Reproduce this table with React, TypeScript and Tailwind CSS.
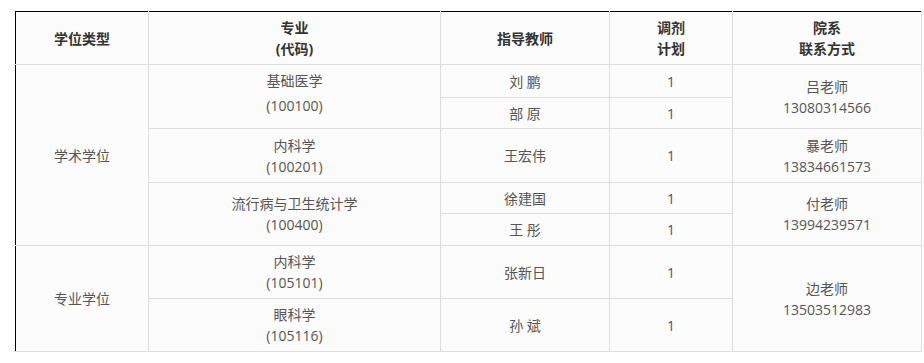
const cell = 'border border-[#dddddd] text-center align-middle px-2'

const App = () => {
  return (
    <div
      className="w-[924px] h-[363px] bg-white pt-[11px] pl-[15px] text-[14px] text-[#555555]"
      style={{ fontFamily: '"Open Sans", "Noto Sans CJK SC", sans-serif' }}
    >
      <table className="w-[906px] table-fixed border-collapse bg-[#fcfcfc] border-t border-l border-t-black border-l-black">
        <colgroup>
          <col className="w-[133px]" />
          <col className="w-[292px]" />
          <col className="w-[169px]" />
          <col className="w-[123px]" />
          <col className="w-[189px]" />
        </colgroup>
        <thead>
          <tr className="h-[53px] font-bold text-[#333333] leading-[21px]">
            <th className={`${cell} border-t-black border-l-black`}>学位类型</th>
            <th className={`${cell} border-t-black`}>
              专业
              <br />
              (代码)
            </th>
            <th className={`${cell} border-t-black`}>指导教师</th>
            <th className={`${cell} border-t-black`}>
              调剂
              <br />
              计划
            </th>
            <th className={`${cell} border-t-black`}>
              院系
              <br />
              联系方式
            </th>
          </tr>
        </thead>
        <tbody className="leading-[21px]">
          <tr className="h-[33px]">
            <td rowSpan={5} className={`${cell} border-l-black`}>学术学位</td>
            <td rowSpan={2} className={`${cell} leading-[25px] pb-[7px]`}>
              基础医学
              <br />
              (100100)
            </td>
            <td className={cell}>刘 鹏</td>
            <td className={cell}>1</td>
            <td rowSpan={2} className={cell}>
              吕老师
              <br />
              13080314566
            </td>
          </tr>
          <tr className="h-[31px]">
            <td className={cell}>部 原</td>
            <td className={cell}>1</td>
          </tr>
          <tr className="h-[54px]">
            <td className={cell}>
              内科学
              <br />
              (100201)
            </td>
            <td className={cell}>王宏伟</td>
            <td className={cell}>1</td>
            <td className={cell}>
              暴老师
              <br />
              13834661573
            </td>
          </tr>
          <tr className="h-[31px]">
            <td rowSpan={2} className={cell}>
              流行病与卫生统计学
              <br />
              (100400)
            </td>
            <td className={cell}>徐建国</td>
            <td className={cell}>1</td>
            <td rowSpan={2} className={cell}>
              付老师
              <br />
              13994239571
            </td>
          </tr>
          <tr className="h-[32px]">
            <td className={cell}>王 彤</td>
            <td className={cell}>1</td>
          </tr>
          <tr className="h-[53px]">
            <td rowSpan={2} className={`${cell} border-l-black`}>专业学位</td>
            <td className={cell}>
              内科学
              <br />
              (105101)
            </td>
            <td className={cell}>张新日</td>
            <td className={cell}>1</td>
            <td rowSpan={2} className={cell}>
              边老师
              <br />
              13503512983
            </td>
          </tr>
          <tr className="h-[53px]">
            <td className={cell}>
              眼科学
              <br />
              (105116)
            </td>
            <td className={cell}>孙 斌</td>
            <td className={cell}>1</td>
          </tr>
        </tbody>
      </table>
    </div>
  )
}

export default App
